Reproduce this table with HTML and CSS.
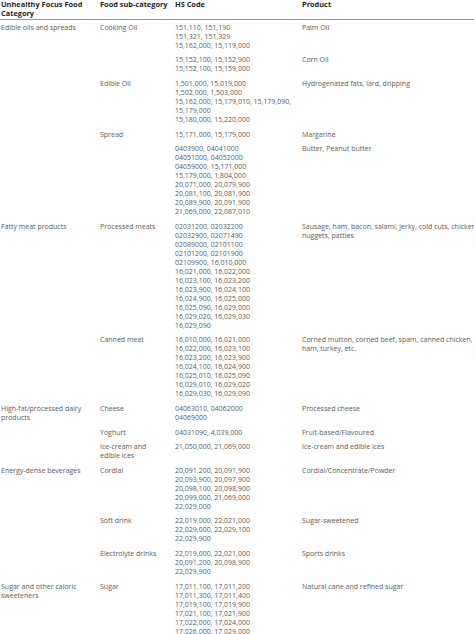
FILE: index.html
```html
<!DOCTYPE html>
<html>
<head>
<meta charset="utf-8">
<link rel="stylesheet" href="styles.css">
</head>
<body>
<table class="tbl">
<colgroup><col class="c1"><col class="c2"><col class="c3"><col class="c4"></colgroup>
<thead>
<tr><th>Unhealthy Focus Food<br>Category</th><th>Food sub-category</th><th>HS Code</th><th>Product</th></tr>
</thead>
<tbody>
<tr><td>Edible oils and spreads</td><td>Cooking Oil</td><td>151,110, 151,190<br>151,321, 151,329<br>15,162,000, 15,119,000</td><td>Palm Oil</td></tr>
<tr><td></td><td></td><td>15,152,100, 15,152,900<br>15,152,100, 15,159,000</td><td>Corn Oil</td></tr>
<tr><td></td><td>Edible Oil</td><td>1,501,000, 15,019,000<br>1,502,000, 1,503,000<br>15,162,000, 15,179,010, 15,179,090,<br>15,179,000<br>15,180,000, 15,220,000</td><td>Hydrogenated fats, lard, dripping</td></tr>
<tr><td></td><td>Spread</td><td>15,171,000, 15,179,000</td><td>Margarine</td></tr>
<tr><td></td><td></td><td>0403900, 04041000<br>04051000, 04052000<br>04059000, 15,171,000<br>15,179,000, 1,804,000<br>20,071,000, 20,079,900<br>20,081,100, 20,081,900<br>20,089,900, 20,091,900<br>21,069,000, 22,087,010</td><td>Butter, Peanut butter</td></tr>
<tr><td>Fatty meat products</td><td>Processed meats</td><td>02031200, 02032200<br>02032900, 02071490<br>02089000, 02101100<br>02101200, 02101900<br>02109900, 16,010,000<br>16,021,000, 16,022,000<br>16,023,100, 16,023,200<br>16,023,900, 16,024,100<br>16,024,900, 16,025,000<br>16,025,090, 16,029,000<br>16,029,020, 16,029,030<br>16,029,090</td><td>Sausage, ham, bacon, salami, jerky, cold cuts, chicken<br>nuggets, patties</td></tr>
<tr><td></td><td>Canned meat</td><td>16,010,000, 16,021,000<br>16,022,000, 16,023,100<br>16,023,200, 16,023,900<br>16,024,100, 16,024,900<br>16,025,010, 16,025,090<br>16,029,010, 16,029,020<br>16,029,030, 16,029,090</td><td>Corned mutton, corned beef, spam, canned chicken,<br>ham, turkey, etc.</td></tr>
<tr><td>High-fat/processed dairy<br>products</td><td>Cheese</td><td>04063010, 04062000<br>04069000</td><td>Processed cheese</td></tr>
<tr><td></td><td>Yoghurt</td><td>04031090, 4,039,000</td><td>Fruit-based/Flavoured</td></tr>
<tr><td></td><td>Ice-cream and<br>edible ices</td><td>21,050,000, 21,069,000</td><td>Ice-cream and edible ices</td></tr>
<tr><td>Energy-dense beverages</td><td>Cordial</td><td>20,091,200, 20,091,900<br>20,093,900, 20,097,900<br>20,098,100, 20,098,900<br>20,099,000, 21,069,000<br>22,029,000</td><td>Cordial/Concentrate/Powder</td></tr>
<tr><td></td><td>Soft drink</td><td>22,019,000, 22,021,000<br>22,029,000, 22,029,100<br>22,029,900</td><td>Sugar-sweetened</td></tr>
<tr><td></td><td>Electrolyte drinks</td><td>22,019,000, 22,021,000<br>20,091,200, 20,098,900<br>22,029,900</td><td>Sports drinks</td></tr>
<tr><td>Sugar and other caloric<br>sweeteners</td><td>Sugar</td><td>17,011,100, 17,011,200<br>17,011,300, 17,011,400<br>17,019,100, 17,019,900<br>17,021,100, 17,021,900<br>17,022,000, 17,024,000<br>17,026,000, 17,029,000</td><td>Natural cane and refined sugar</td></tr>
</tbody>
</table>
</body>
</html>
```
FILE: styles.css
```css
html, body {
  margin: 0;
  padding: 0;
  background: #fff;
  overflow: hidden;
}
body {
  width: 474px;
  height: 634px;
}
.tbl {
  border-collapse: collapse;
  table-layout: fixed;
  width: 560px;
  font-family: "Open Sans", "Noto Sans", sans-serif;
  font-size: 7px;
  line-height: 9px;
  color: #5c5c5c;
}
.c1 { width: 100px; }
.c2 { width: 75px; }
.c3 { width: 127px; }
.c4 { width: 258px; }
.tbl th {
  text-align: left;
  vertical-align: top;
  font-size: 7.4px;
  font-weight: 700;
  color: #1e1e1e;
  padding: 0 0 1px 0;
  border-bottom: 1px solid #9a9a9a;
  white-space: nowrap;
}
.tbl td {
  vertical-align: top;
  padding: 2.8px 0;
  white-space: nowrap;
}
.tbl td:first-child, .tbl th:first-child {
  padding-left: 1px;
}
```
